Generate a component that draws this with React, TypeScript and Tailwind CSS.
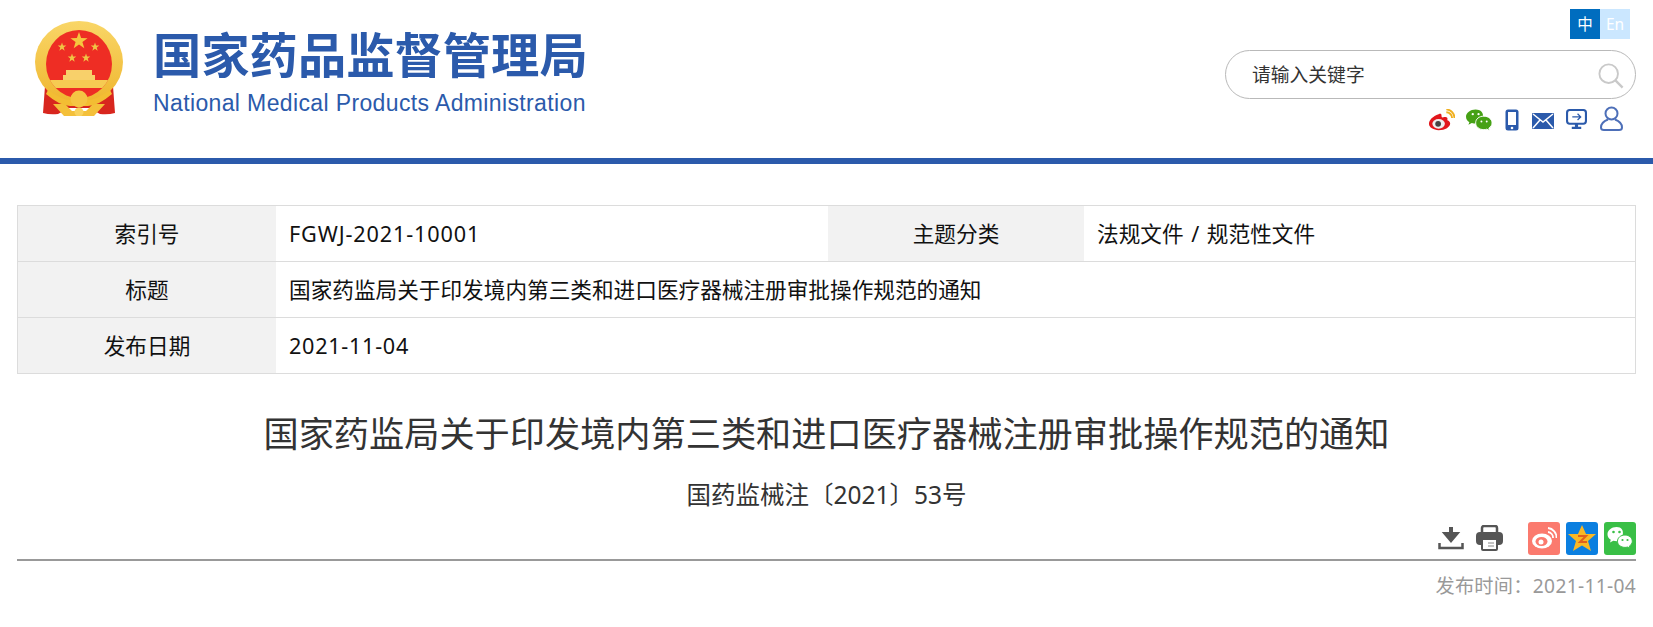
const cjk = 'font-["Noto_Sans","Noto_Sans_CJK_SC","Liberation_Sans",sans-serif]'

const starPoints = '0,-10 2.350,-3.200 9.500,-3.100 3.800,1.200 5.900,8.100 0,4 -5.900,8.100 -3.800,1.200 -9.500,-3.100 -2.350,-3.200'

function Star({ x, y, r, fill }: { x: number; y: number; r: number; fill: string }) {
  return <polygon points={starPoints} fill={fill} transform={`translate(${x} ${y}) scale(${r / 10})`} />
}

function Emblem() {
  return (
    <svg width="90" height="96" viewBox="0 0 90 96">
      <defs>
        <linearGradient id="ring" x1="0" y1="0" x2="0" y2="1">
          <stop offset="0" stopColor="#f9d667" />
          <stop offset="1" stopColor="#efb62f" />
        </linearGradient>
        <clipPath id="inner"><ellipse cx="45" cy="44" rx="33" ry="34" /></clipPath>
      </defs>
      <path d="M11 66 L9 93 Q16 95 24 94 L35 88 L55 88 L66 94 Q74 95 81 93 L79 66 Z" fill="#d8261e" />
      <ellipse cx="45" cy="42" rx="44" ry="41" fill="url(#ring)" />
      <g clipPath="url(#inner)">
        <rect width="90" height="90" fill="#ee2d24" />
        <path d="M32 50h26v5h3v5h-32v-5h3z" fill="#f8d06a" />
        <rect x="10" y="60" width="70" height="8" fill="#f6cb52" />
      </g>
      <Star x={45} y={21} r={9} fill="#f5c63f" />
      <Star x={28} y={27} r={4.500} fill="#f0c445" />
      <Star x={61} y={27} r={4.500} fill="#f0c445" />
      <Star x={38} y={38} r={4.500} fill="#f0c445" />
      <Star x={52} y={38} r={4.500} fill="#f0c445" />
      <path d="M30 96 L19 84 L31 84 L38 91 L52 91 L59 84 L71 84 L60 96 Z" fill="#f4c03a" />
      <path d="M14 70 Q28 80 36 80 L54 80 Q62 80 76 70 L78 74 Q64 86 54 86 L36 86 Q26 86 12 74 Z" fill="#f3bd33" />
      <circle cx="45" cy="79" r="8.500" fill="#f5c544" />
      <circle cx="45" cy="92" r="4.500" fill="#f9d25e" />
    </svg>
  )
}

function HeaderIcons() {
  return (
    <div className="flex items-end h-[26px]">
      <svg width="27" height="22" viewBox="0 0 28 22" className="mr-[11px]">
        <path d="M11 5C5 7 1 11 1 15c0 4 5 6.500 10 6.500 7 0 12-3.500 12-7 0-2-2-3-3-3.300 1-3-1-4-4-3-2 .6-2-.5-2-2 0-1.500-1-2-3-1.200Z" fill="#e2161c" />
        <ellipse cx="11" cy="15" rx="6.500" ry="5" fill="#eee" />
        <circle cx="10.500" cy="15" r="3" fill="#444" />
        <path d="M19 3a6 6 0 0 1 6 6M19 0a9 9 0 0 1 8.500 9" stroke="#f0b020" strokeWidth="2" fill="none" />
      </svg>
      <svg width="27" height="22" viewBox="0 0 28 22" className="mr-[12px]">
        <path d="M10 0C4.500 0 0 3.500 0 7.500c0 2.500 1.500 4.500 3.500 5.800L2.500 16l3.500-2c2 .5 4 .8 6 .5C20 12 20 0 10 0Z" fill="#46a115" />
        <path d="M18.500 7C13.500 7 10 10 10 14s3.500 7 8.500 7c1 0 2-.1 3-.5l3 1.500-.8-2.500C26 18 27 16 27 14c0-4-4-7-8.500-7Z" fill="#46a115" stroke="#fff" />
        <circle cx="7" cy="5" r="1.200" fill="#fff" /><circle cx="13" cy="5" r="1.200" fill="#fff" />
        <circle cx="16" cy="12.500" r="1" fill="#fff" /><circle cx="21.500" cy="12.500" r="1" fill="#fff" />
      </svg>
      <svg width="14" height="22" viewBox="0 0 14 22" className="mr-[13px]">
        <rect x="0.500" y="0.500" width="13" height="21" rx="2.500" fill="#2b5aab" />
        <rect x="3" y="3" width="8" height="13" fill="#fff" />
        <circle cx="7" cy="19" r="1.300" fill="#fff" />
      </svg>
      <svg width="22" height="16" viewBox="0 0 22 16" className="mr-[12px] mb-[2px]">
        <rect width="22" height="16" rx="1" fill="#2b5aab" />
        <path d="M1 1l10 8 10-8M1 15l7-8M21 15l-7-8" stroke="#fff" strokeWidth="1.500" fill="none" />
      </svg>
      <svg width="21" height="21" viewBox="0 0 20 20" className="mr-[13px] mb-[1px]">
        <rect x="1" y="1" width="18" height="13" rx="2.500" fill="#fff" stroke="#2b5aab" strokeWidth="2" />
        <path d="M6 7.500h8M11 4.500l3 3-3 3" stroke="#2b5aab" strokeWidth="1.200" fill="none" />
        <path d="M8.500 14h3v3h3v2h-9v-2h3z" fill="#2b5aab" />
      </svg>
      <svg width="23" height="25" viewBox="0 0 23 25">
        <circle cx="11.500" cy="7.500" r="6" fill="none" stroke="#4d6fb8" strokeWidth="2" />
        <path d="M8 13.500C4 15 1 18 1 21.500c0 2 1 2.500 3 2.500h15c2 0 3-.5 3-2.500 0-3.500-3-6.500-7-8" fill="none" stroke="#4d6fb8" strokeWidth="2" />
      </svg>
    </div>
  )
}

function ShareIcons() {
  return (
    <div className="flex items-center justify-end h-[34px]">
      <svg width="26" height="26" viewBox="0 0 26 26" className="mr-[12px]">
        <path d="M13 2v11M8 9l5 6 5-6Z" stroke="#555" strokeWidth="4" fill="#555" />
        <path d="M1.500 18v5h23v-5" stroke="#555" strokeWidth="2.500" fill="none" />
      </svg>
      <svg width="27" height="26" viewBox="0 0 27 26" className="mr-[25px]">
        <path d="M6 8V3a2 2 0 0 1 2-2h11a2 2 0 0 1 2 2v5" fill="none" stroke="#555" strokeWidth="2.500" />
        <rect y="7" width="27" height="13" rx="4" fill="#555" />
        <rect x="6" y="14" width="15" height="11" rx="1" fill="#fff" stroke="#555" strokeWidth="2" />
        <path d="M12 18h6M12 21h6" stroke="#888" />
      </svg>
      <span className="w-[32px] h-[33px] rounded-[3px] bg-[#fb7a6e] mr-[6px] flex items-center justify-center">
        <svg width="26" height="22" viewBox="0 0 26 22">
          <ellipse cx="11" cy="14" rx="10" ry="7.500" fill="#fff" />
          <ellipse cx="10.500" cy="14.500" rx="6" ry="4.500" fill="#fb7a6e" />
          <circle cx="10" cy="15" r="2.500" fill="#fff" />
          <path d="M17 5a5.500 5.500 0 0 1 5 6M17 1a9.500 9.500 0 0 1 8.500 10" stroke="#fff" strokeWidth="1.800" fill="none" />
        </svg>
      </span>
      <span className="w-[32px] h-[33px] rounded-[3px] bg-[#0b7fe0] mr-[6px] flex items-center justify-center">
        <svg width="30" height="28" viewBox="0 0 30 28">
          <path d="M15 1l4 9h10l-8 7 3 10-9-5.500L6 27l3-10-8-7h10z" fill="#f9b825" />
          <path d="M11 12h8l-6 6h7" stroke="#e2601c" strokeWidth="2" fill="none" />
        </svg>
      </span>
      <span className="w-[32px] h-[33px] rounded-[3px] bg-[#39bf46] flex items-center justify-center">
        <svg width="26" height="24" viewBox="0 0 26 24">
          <path d="M9.500 1C4.500 1 .5 4.300.5 8.300c0 2.300 1.300 4.200 3.300 5.500L3 16.500l3.300-1.800c1.200.3 2.300.5 3.500.5C16 15 20 1 9.500 1Z" fill="#fff" />
          <path d="M18 9c-4.300 0-7.500 2.800-7.500 6.200s3.200 6.200 7.500 6.200c.8 0 1.600-.1 2.400-.4l2.600 1.500-.7-2.300c1.800-1.100 3-3 3-5 0-3.400-3.300-6.200-7.300-6.200Z" fill="#fff" stroke="#39bf46" />
          <circle cx="6.500" cy="6" r="1.300" fill="#39bf46" /><circle cx="12.500" cy="6" r="1.300" fill="#39bf46" />
          <circle cx="15.500" cy="14" r="1.100" fill="#39bf46" /><circle cx="20.500" cy="14" r="1.100" fill="#39bf46" />
        </svg>
      </span>
    </div>
  )
}

const labelCell = 'bg-[#f2f2f2] flex items-center justify-center pt-[2px]'
const valueCell = 'flex items-center pl-[13px] pt-[2px] bg-white'

export default function App() {
  return (
    <div className={`${cjk} bg-white h-[627px] overflow-hidden text-[#222]`}>
      <header className="h-[164px] border-b-[6px] border-[#2b5aab] flex justify-between">
        <div className="flex pl-[34px] pt-[20px]">
          <Emblem />
          <div className="ml-[29px] pt-[7px] text-[#2b5aab]">
            <div className="text-[48.300px] leading-[54px] font-bold whitespace-nowrap">国家药品监督管理局</div>
            <div className='font-["Liberation_Sans",sans-serif] text-[23px] tracking-[0.37px] leading-[26px] mt-[9px] whitespace-nowrap'>National Medical Products Administration</div>
          </div>
        </div>
        <div className="w-[428px] flex flex-col items-end pr-[17px] pt-[9px]">
          <div className="flex pr-[6px] text-[15.500px] leading-[30px] text-center">
            <span className="w-[30px] h-[30px] bg-[#006dbf] text-white">中</span>
            <span className="w-[30px] h-[30px] bg-[#cbe7ff] text-white">En</span>
          </div>
          <div className="mt-[11px] w-[411px] h-[49px] rounded-[25px] border border-[#b9b9b9] flex items-center justify-between pl-[26px] pr-[11px]">
            <span className="text-[18.800px] text-[#333] pt-[2px]">请输入关键字</span>
            <svg width="26" height="26" viewBox="0 0 28 28" className="mt-[2px]">
              <circle cx="11.500" cy="11.500" r="10" fill="none" stroke="#c9c9c9" strokeWidth="2" />
              <path d="M18.500 18.500l8 8" stroke="#c9c9c9" strokeWidth="2.500" />
            </svg>
          </div>
          <div className="mt-[6px] pr-[13px]"><HeaderIcons /></div>
        </div>
      </header>

      <main className="px-[17px] pt-[41px]">
        <div className="grid grid-cols-[258px_552px_256px_1fr] grid-rows-[55px_55px_55px] gap-y-px bg-[#dcdcdc] border border-[#dcdcdc] h-[169px] text-[21.650px] text-[#111]">
          <div className={labelCell}>索引号</div>
          <div className={`${valueCell} tracking-[0.85px]`}>FGWJ-2021-10001</div>
          <div className={labelCell}>主题分类</div>
          <div className={`${valueCell} [word-spacing:2px]`}>法规文件 / 规范性文件</div>
          <div className={labelCell}>标题</div>
          <div className={`${valueCell} col-span-3`}>国家药监局关于印发境内第三类和进口医疗器械注册审批操作规范的通知</div>
          <div className={labelCell}>发布日期</div>
          <div className={`${valueCell} col-span-3 tracking-[0.7px]`}>2021-11-04</div>
        </div>

        <h1 className="text-center text-[35.200px] leading-[50px] mt-[34px] text-[#333]">国家药监局关于印发境内第三类和进口医疗器械注册审批操作规范的通知</h1>
        <p className="text-center text-[24.500px] leading-[34px] mt-[20px] text-[#333]">国药监械注〔2021〕53号</p>
        <div className="border-b-2 border-[#999] pb-[4px] mt-[9px]">
          <ShareIcons />
        </div>
        <p className="text-right text-[19.200px] tracking-[0.3px] leading-[28px] mt-[11px] text-[#999]">发布时间：2021-11-04</p>
      </main>
    </div>
  )
}
